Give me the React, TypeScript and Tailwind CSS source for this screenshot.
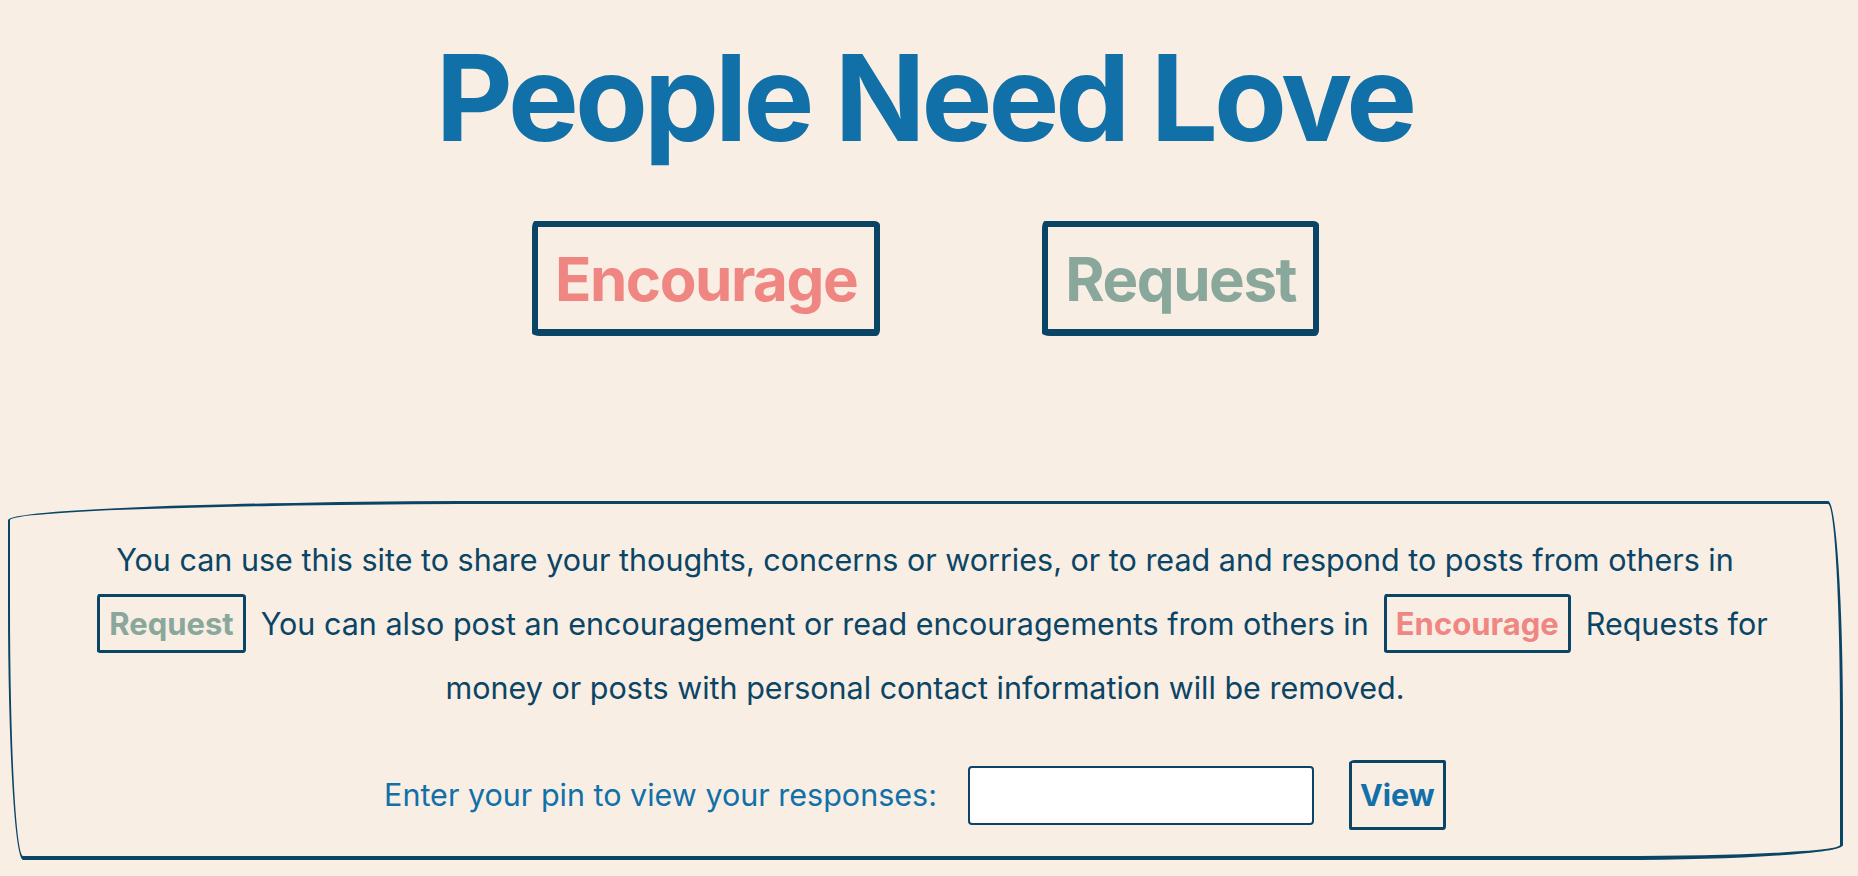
import React from "react";

const font = { fontFamily: "Inter, 'Noto Sans', sans-serif" };

function Mini({ label, color }: { label: string; color: string }) {
  return (
    <span
      className={`mx-[15px] inline-block border-[3px] border-[#0b4566] px-[9px] text-[31px] font-bold leading-[53px] ${color} rounded-[2px_4px_3px_5px/5px_3px_4px_2px]`}
    >
      {label}
    </span>
  );
}

export default function App() {
  return (
    <div className="min-h-[876px] bg-[#f8eee4] pb-4" style={font}>
      <h1 className="pt-[39px] pr-[9px] text-center text-[119px] font-bold leading-none tracking-[-0.033em] text-[#1170a8]">
        People Need Love
      </h1>

      <div className="mt-[63px] flex justify-center gap-[162px] pr-[7px]">
        <button className="rounded-[3px_6px_4px_8px/8px_4px_6px_3px] border-[6px] border-b-[7px] border-[#0b4566] px-[17px] pt-[22px] pb-[20px] text-[60px] font-bold leading-none tracking-[-0.024em] text-[#f08682]">
          Encourage
        </button>
        <button className="rounded-[3px_6px_4px_8px/8px_4px_6px_3px] border-[6px] border-b-[7px] border-[#0b4566] px-[17px] pt-[22px] pb-[20px] text-[60px] font-bold leading-none tracking-[-0.024em] text-[#8aa79b]">
          Request
        </button>
      </div>

      <div className="mt-[165px] ml-2 mr-[15px] rounded-[500px_15px_225px_15px/19px_225px_15px_255px] border-[3px] border-l-2 border-b-4 border-[#0b4566] px-[50px] pt-[24px] pb-[26px]">
        <p className="text-center text-[30.5px] leading-[64px] text-[#0b4566]">
          You can use this site to share your thoughts, concerns or worries, or to read and respond to posts from others in
          <Mini label="Request" color="text-[#8aa79b]" />
          You can also post an encouragement or read encouragements from others in
          <Mini label="Encourage" color="text-[#f08682]" />
          Requests for money or posts with personal contact information will be removed.
        </p>

        <div className="mt-[40px] flex items-center justify-center pr-[20px]">
          <span className="text-[30.5px] text-[#1170a8]">Enter your pin to view your responses:</span>
          <input
            type="text"
            className="ml-[31px] h-[59px] w-[346px] rounded-[4px] border-2 border-[#0b4566] bg-white px-2 text-[24px] outline-none"
          />
          <button className="ml-[35px] h-[70px] w-[97px] rounded-[6px_2px_3px_2px/3px_2px_4px_2px] border-[3px] border-[#0b4566] text-[30.5px] font-bold text-[#1170a8]">
            View
          </button>
        </div>
      </div>
    </div>
  );
}
